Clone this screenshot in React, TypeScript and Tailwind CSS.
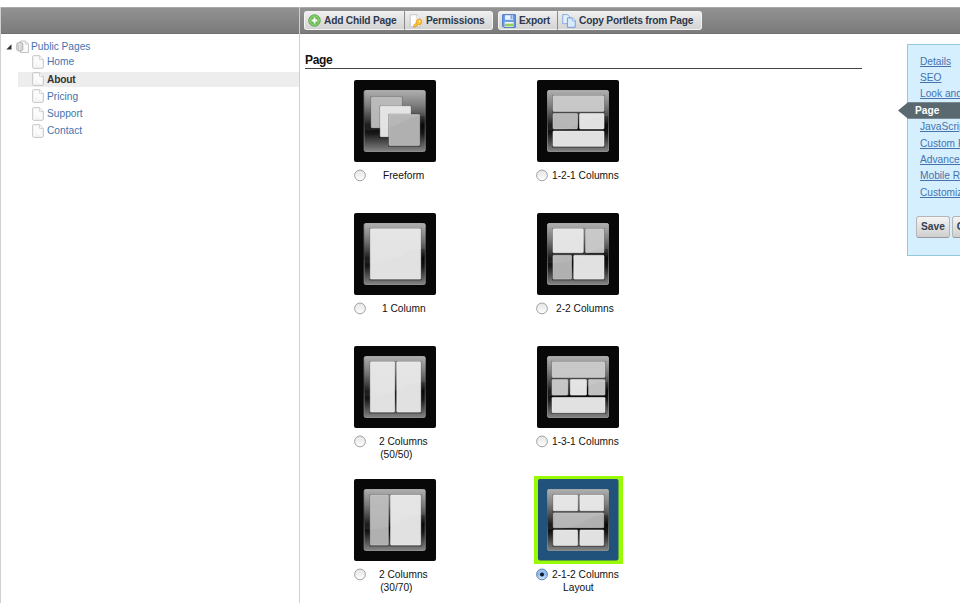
import React from "react";

type Block = { x: number; y: number; w: number; h: number; tone: "light" | "mid" | "dark" };

const b = (x: number, y: number, x2: number, y2: number, tone: Block["tone"] = "light"): Block => ({
  x,
  y,
  w: x2 - x,
  h: y2 - y,
  tone,
});

const fills = { light: "#e1e1e1", mid: "#c0c0c0", dark: "#b0b0b0" };

type Layout = { id: string; label: string; second?: string; labelClass: string; blocks: Block[]; selected?: boolean };

const layouts: Layout[] = [
  {
    id: "free",
    label: "Freeform",
    labelClass: "ml-[17px]",
    blocks: [b(17, 17, 48, 48, "dark"), b(26, 26, 57, 57), b(34.7, 34.3, 66, 65.7, "dark")],
  },
  {
    id: "c121",
    label: "1-2-1 Columns",
    labelClass: "ml-[4px]",
    blocks: [b(15.7, 15.5, 67.3, 31.7, "mid"), b(15.7, 33.3, 40.8, 49.2, "dark"), b(42.3, 33.3, 67.3, 49.2), b(15.7, 50.8, 67.3, 66.6)],
  },
  { id: "c1", label: "1 Column", labelClass: "ml-[16px]", blocks: [b(16, 15.5, 67, 66.4)] },
  {
    id: "c22",
    label: "2-2 Columns",
    labelClass: "ml-[8px]",
    blocks: [b(15.7, 15.5, 46.6, 40), b(48.3, 15.5, 67.3, 40, "mid"), b(15.7, 42, 34.8, 66.4, "dark"), b(36.5, 42, 67.3, 66.4)],
  },
  {
    id: "c5050",
    label: "2 Columns",
    second: "(50/50)",
    labelClass: "ml-[13px]",
    blocks: [b(16, 15.5, 41, 66.4), b(42.5, 15.5, 67, 66.4)],
  },
  {
    id: "c131",
    label: "1-3-1 Columns",
    labelClass: "ml-[4px]",
    blocks: [
      b(14.7, 15.5, 68.3, 31.7, "mid"),
      b(14.7, 33.3, 31.2, 49.4, "mid"),
      b(33, 33.3, 49.8, 49.4),
      b(51.3, 33.3, 68.3, 49.4, "mid"),
      b(14.7, 51.2, 68.3, 67),
    ],
  },
  {
    id: "c3070",
    label: "2 Columns",
    second: "(30/70)",
    labelClass: "ml-[13px]",
    blocks: [b(16, 15.7, 34.6, 66.4, "dark"), b(36.3, 15.7, 67, 66.4)],
  },
  {
    id: "c212",
    label: "2-1-2 Columns",
    second: "Layout",
    labelClass: "ml-[4px]",
    selected: true,
    blocks: [
      b(16, 15.7, 41, 32),
      b(42.6, 15.7, 67, 32),
      b(16, 33.6, 67, 49, "dark"),
      b(16, 50.7, 41, 66.7),
      b(42.6, 50.7, 67, 66.7),
    ],
  },
];

function Thumb({ item, right }: { item: Layout; right: boolean }) {
  const gx = right ? 10.5 : 10.2;
  const id = item.id;
  return (
    <svg
      width="82"
      height="82"
      viewBox="0 0 82 82"
      className={item.selected ? "shrink-0 bg-[#99fa05] shadow-[0_0_0_3px_#99fa05,1px_0_0_3px_#99fa05]" : "shrink-0"}
    >
      <defs>
        <linearGradient id={`glass-${id}`} x1="0" y1="0" x2="0" y2="1">
          <stop offset="0" stopColor="#a0a0a0" />
          <stop offset="0.25" stopColor="#6a6a6a" />
          <stop offset="0.45" stopColor="#303030" />
          <stop offset="0.57" stopColor="#080808" />
          <stop offset="0.7" stopColor="#161616" />
          <stop offset="1" stopColor="#858585" />
        </linearGradient>
        <linearGradient id={`edge-${id}`} x1="0" y1="0" x2="0" y2="1">
          <stop offset="0" stopColor="#a8a8a8" />
          <stop offset="0.5" stopColor="#444" />
          <stop offset="1" stopColor="#8c8c8c" />
        </linearGradient>
        <linearGradient id={`shine-${id}`} x1="0" y1="0" x2="0" y2="1">
          <stop offset="0" stopColor="#fff" stopOpacity="0.25" />
          <stop offset="1" stopColor="#fff" stopOpacity="0.12" />
        </linearGradient>
      </defs>
      <rect
        x={item.selected ? 1 : 0}
        width={item.selected ? 80.5 : 82}
        height={item.selected ? 81.5 : 82}
        rx="2"
        fill={item.selected ? "#21527b" : "#080808"}
      />
      <rect x={gx} y="10.5" width="61" height="61" rx="1.5" fill={`url(#glass-${id})`} stroke={`url(#edge-${id})`} strokeWidth="1" />
      {item.blocks.map((s, i) => (
        <g key={i}>
          <rect x={s.x - 0.7} y={s.y - 0.5} width={s.w + 1.4} height={s.h + 1.6} rx="1" fill="#000" opacity="0.35" />
          <rect
            x={s.x + 0.3}
            y={s.y + 0.3}
            width={s.w - 0.6}
            height={s.h - 0.6}
            rx="0.8"
            fill={fills[s.tone]}
            stroke={s.tone === "light" ? "#f0f0f0" : "#c8c8c8"}
            strokeWidth="0.6"
          />
        </g>
      ))}
      <path d="M11 11H71V36C62 36 56 37 48 42C38 48 25 51 11 50Z" fill={`url(#shine-${id})`} opacity="0.6" />
    </svg>
  );
}

function Radio({ on }: { on?: boolean }) {
  return (
    <svg width="12" height="13" viewBox="0 0 12 13" className="shrink-0">
      <defs>
        <linearGradient id={on ? "radio-on" : "radio-off"} x1="0" y1="0" x2="0" y2="1">
          <stop offset="0" stopColor={on ? "#a5c8ee" : "#e4e4e4"} />
          <stop offset="0.5" stopColor={on ? "#8fbaf0" : "#f1f1f1"} />
          <stop offset="1" stopColor={on ? "#d8f2ff" : "#fff"} />
        </linearGradient>
      </defs>
      <circle cx="6" cy="6.4" r="5.4" fill={on ? "url(#radio-on)" : "url(#radio-off)"} stroke={on ? "#5577a8" : "#999"} strokeWidth="0.9" />
      {on && <circle cx="6" cy="6.4" r="2" fill="#101828" />}
    </svg>
  );
}

function LayoutOption({ item, right }: { item: Layout; right: boolean }) {
  return (
    <div className="flex h-[133px] w-[183px] flex-col">
      <Thumb item={item} right={right} />
      <div className={right ? "-ml-[1px] mt-[7px] flex items-start" : "mt-[7px] flex items-start"}>
        <Radio on={item.selected} />
        <div className={`${item.labelClass} text-center text-[10.2px] leading-[13px] whitespace-nowrap text-[#111]`}>
          <div>{item.label}</div>
          {item.second && <div className="-ml-[14px]">{item.second}</div>}
        </div>
      </div>
    </div>
  );
}

function PageIcon() {
  return (
    <svg width="12" height="14" viewBox="0 0 12 14" className="shrink-0">
      <path d="M1.3.7H7.6L11.3 4.4V12.2Q11.3 13.3 10.2 13.3H1.6Q.7 13.3.7 12.2V1.5Q.7.7 1.3.7Z" fill="#fbfbfb" stroke="#c4c4c4" />
      <path d="M7.6.7V4.4H11.3" fill="#fff" stroke="#d2d2d2" />
      <path d="M3 8L9 12H3Z" fill="#f4f4f4" />
    </svg>
  );
}

function PagesIcon() {
  return (
    <svg width="13" height="14" viewBox="0 0 13 14" className="shrink-0">
      <path d="M4.5 1H9.5L12.5 4V12.5H4.5Z" fill="#fafafa" stroke="#c4c4c4" />
      <path d="M9.3 1V4H12.5" fill="none" stroke="#d0d0d0" />
      <path d="M.8 4Q.8 2.6 3.8 2.6T6.8 4V9.6Q6.8 11 3.8 11T.8 9.6Z" fill="#e2e2e2" stroke="#a7a7a7" strokeWidth="0.9" />
      <path d="M2.5 4.6V10M5 4.6V10" stroke="#c4c4c4" strokeWidth="0.8" />
    </svg>
  );
}

function AddIcon() {
  return (
    <svg width="13" height="13" viewBox="0 0 13 13" className="shrink-0">
      <circle cx="6.5" cy="6.5" r="5.8" fill="#65b94b" stroke="#4a9c40" strokeWidth="0.7" />
      <circle cx="6.5" cy="6.5" r="4.6" fill="none" stroke="#b4e39a" strokeWidth="0.7" />
      <path d="M6.5 3.6V9.4M3.6 6.5H9.4" stroke="#fff" strokeWidth="1.8" />
    </svg>
  );
}

function KeyIcon() {
  return (
    <svg width="14" height="14" viewBox="0 0 14 14" className="shrink-0">
      <path d="M1.2.7H7.7L11 4V12.8H1.2Z" fill="#fcfcfc" stroke="#bbb" strokeWidth="0.8" />
      <path d="M7.7.7V4H11" fill="#fff" stroke="#c2c2c2" strokeWidth="0.7" />
      <path d="M8.5 8L4.5 11.3V13H6.8V12H8L10 10" fill="#f7c93e" stroke="#e29a26" strokeWidth="0.8" />
      <circle cx="10" cy="7.9" r="2.9" fill="#fbc33b" stroke="#e29a26" strokeWidth="0.7" />
      <circle cx="10.6" cy="7.2" r="0.8" fill="#fff4c5" />
    </svg>
  );
}

function SaveIcon() {
  return (
    <svg width="14" height="14" viewBox="0 0 14 14" className="shrink-0">
      <path d="M.7.7H13.3V13.3H1.8L.7 12.2Z" fill="#6b9ce8" stroke="#4271c4" />
      <rect x="3" y="1.2" width="8" height="4.6" fill="#e9f2ff" />
      <path d="M8.5 1.2H10.5V5H8.5Z" fill="#7ba8eb" />
      <rect x="2.7" y="8" width="8.8" height="5" fill="#f4f8f0" />
      <rect x="2.7" y="9.6" width="8.8" height="2.8" fill="#96cc66" />
    </svg>
  );
}

function CopyIcon() {
  return (
    <svg width="14" height="14" viewBox="0 0 14 14" className="shrink-0">
      <path d="M.7.6H5.4L7.6 2.8V9.7H.7Z" fill="#e5f0fd" stroke="#7fa2dd" strokeWidth="0.9" />
      <path d="M5.4 3.9H10.5L13.2 6.6V13.3H5.4Z" fill="#d9eafc" stroke="#6a93d7" strokeWidth="0.9" />
      <path d="M10.3 3.9V6.8H13.2" fill="#fff" stroke="#7da2dd" strokeWidth="0.8" />
    </svg>
  );
}

function ToolButton({ icon, label, width, left, right }: { icon: React.ReactNode; label: string; width: string; left?: boolean; right?: boolean }) {
  return (
    <button
      className={`flex h-[19px] items-center gap-[3px] border-y border-[#f3f3f3] bg-linear-to-b from-[#eeeeee] to-[#d4d4d4] text-[10.2px] leading-none font-bold tracking-[-0.2px] whitespace-nowrap text-[#2e394c] ${width} ${left ? "rounded-l-[3px] border-l border-r border-r-[#888] pl-[3px]" : ""} ${right ? "rounded-r-[3px] border-r pl-[4px]" : ""}`}
    >
      {icon}
      <span className="pt-[1px]">{label}</span>
    </button>
  );
}

const pages = ["Home", "About", "Pricing", "Support", "Contact"];
const links = ["Details", "SEO", "Look and Feel", "Page", "JavaScript", "Custom Fields", "Advanced", "Mobile Rules", "Customization"];

export default function App() {
  return (
    <div className="flex h-[603px] w-[960px] overflow-hidden bg-white pt-[7px] font-['Liberation_Sans',Arial,sans-serif]">
      <aside className="w-[300px] shrink-0 border-x border-[#d0d0d0]">
        <div className="h-[27px] border-t border-b border-t-[#aaa] border-b-[#707070] bg-linear-to-b from-[#929292] to-[#7b7b7b]" />
        <div className="mt-[5px] flex h-[15px] items-center pl-[5px] text-[10.2px] text-[#4573ae]">
          <svg width="6" height="6" viewBox="0 0 6 6" className="mr-[4px]">
            <path d="M5.5.3V5.5H.3Z" fill="#333" />
          </svg>
          <PagesIcon />
          <span className="ml-[2px]">Public Pages</span>
        </div>
        <ul className="mt-[0.6px] flex flex-col gap-[2.2px] text-[10.2px]">
          {pages.map((p) => (
            <li
              key={p}
              className={`ml-[17px] flex h-[15px] items-center gap-[3px] pl-[14px] ${p === "About" ? "bg-[#ededed] font-bold tracking-[-0.2px] text-[#333]" : "text-[#4573ae]"}`}
            >
              <PageIcon />
              <span>{p}</span>
            </li>
          ))}
        </ul>
      </aside>

      <main className="min-w-0 flex-1">
        <div className="flex h-[27px] items-center border-t border-b border-t-[#aaa] border-b-[#707070] bg-linear-to-b from-[#929292] to-[#7b7b7b] pl-[4px]">
          <ToolButton icon={<AddIcon />} label="Add Child Page" width="w-[101px]" left />
          <ToolButton icon={<KeyIcon />} label="Permissions" width="w-[88px]" right />
          <div className="w-[5px]" />
          <ToolButton icon={<SaveIcon />} label="Export" width="w-[60px]" left />
          <ToolButton icon={<CopyIcon />} label="Copy Portlets from Page" width="w-[144px]" right />
        </div>

        <div className="flex">
          <section className="w-[607px] shrink-0 pt-[18px]">
            <h2 className="ml-[5px] h-[17px] w-[557px] border-b border-[#444] text-[12px] leading-[16px] font-bold tracking-[-0.3px] text-[#111]">Page</h2>
            <div className="mt-[11px] ml-[54px] flex w-[366px] flex-wrap">
              {layouts.map((item, i) => (
                <LayoutOption key={item.id} item={item} right={i % 2 === 1} />
              ))}
            </div>
          </section>

          <nav className="mt-[10px] h-[212px] w-[120px] shrink-0 border border-[#94c8dc] bg-[#d6efff] pt-[8px]">
            <ul className="text-[10.2px]">
              {links.map((l) =>
                l === "Page" ? (
                  <li
                    key={l}
                    className="-ml-[10px] flex h-[16.5px] items-center bg-[#5a696f] pl-[17px] font-bold text-white [clip-path:polygon(0_50%,10px_0,100%_0,100%_100%,10px_100%)]"
                  >
                    {l}
                  </li>
                ) : (
                  <li key={l} className="flex h-[16.4px] items-center pl-[12px]">
                    <a className="whitespace-nowrap text-[#4573ae] underline">{l}</a>
                  </li>
                ),
              )}
            </ul>
            <div className="mt-[15px] ml-[8px] flex gap-[2px]">
              {["Save", "Cancel"].map((t) => (
                <button
                  key={t}
                  className="h-[22px] shrink-0 rounded-[3px] border border-[#b5b5b5] border-b-[#999] bg-linear-to-b from-[#f5f5f5] to-[#cfcfcf] px-[4px] text-[10.2px] leading-none font-bold text-[#34404f]"
                >
                  {t}
                </button>
              ))}
            </div>
          </nav>
        </div>
      </main>
    </div>
  );
}
